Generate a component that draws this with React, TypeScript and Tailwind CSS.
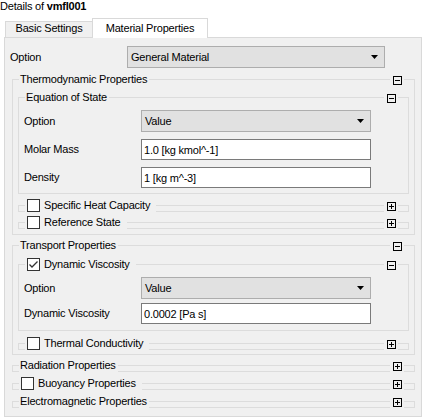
import React from "react";

const LINE = "border-[#dcdcdc]";

const ToggleIcon: React.FC<{ plus?: boolean }> = ({ plus }) => (
  <svg width="9" height="9" viewBox="0 0 9 9" className="block">
    <rect x="0.5" y="0.5" width="8" height="8" fill="none" stroke="#000" />
    <line x1="2" y1="4.5" x2="7" y2="4.5" stroke="#000" />
    {plus && <line x1="4.5" y1="2" x2="4.5" y2="7" stroke="#000" />}
  </svg>
);

const CheckBox: React.FC<{ checked?: boolean }> = ({ checked }) => (
  <svg width="13" height="13" viewBox="0 0 13 13" className="block shrink-0">
    <rect x="0.5" y="0.5" width="12" height="12" fill="#fff" stroke="#333" />
    {checked && (
      <polyline
        points="2.5,6.5 5,9 10.5,3.5"
        fill="none"
        stroke="#333"
        strokeWidth="1.3"
      />
    )}
  </svg>
);

interface GroupProps {
  label: string;
  checkbox?: "on" | "off";
  expanded?: boolean;
  className?: string;
  bodyClassName?: string;
  children?: React.ReactNode;
}

const Group: React.FC<GroupProps> = (props) => {
  const { label, checkbox, expanded, className, bodyClassName, children } = props;
  const closed = expanded ? "" : "border-b";

  return (
    <div className={className}>
      <div className="flex h-[13px]">
        <div className={`self-start mt-[6px] h-[7px] w-[7px] border-t border-l ${closed} ${LINE}`} />
        {checkbox && (
          <div className="ml-[2px]">
            <CheckBox checked={checkbox === "on"} />
          </div>
        )}
        <span
          className={`leading-[13px] whitespace-nowrap ${
            checkbox ? "ml-[4px] pr-[6px]" : "pl-[1px] pr-[2px]"
          }`}
        >
          {label}
        </span>
        <div className={`flex-1 self-start mt-[6px] h-[7px] border-t ${closed} ${LINE}`} />
        <div className="self-start mt-[3px] ml-[3px] mr-[2px]">
          <ToggleIcon plus={!expanded} />
        </div>
        <div className={`self-start mt-[6px] h-[7px] w-[11px] border-t border-r ${closed} ${LINE}`} />
      </div>
      {expanded && (
        <div className={`border-l border-r border-b ${LINE} ${bodyClassName ?? ""}`}>
          {children}
        </div>
      )}
    </div>
  );
};

const Select: React.FC<{ value: string }> = ({ value }) => (
  <div className="flex-1 h-[22px] flex items-center justify-between bg-[#e1e1e1] border border-[#adadad] pl-[3px] pr-[6px]">
    <span className="whitespace-nowrap">{value}</span>
    <svg width="7" height="4" viewBox="0 0 7 4" className="block">
      <polygon points="0,0 7,0 3.5,4" fill="#000" />
    </svg>
  </div>
);

const TextField: React.FC<{ value: string }> = ({ value }) => (
  <input
    readOnly
    value={value}
    className="flex-1 min-w-0 h-[21px] bg-white border border-[#7a7a7a] pl-[2px] outline-none"
  />
);

const Row: React.FC<{ label: string; className?: string; children: React.ReactNode }> = ({
  label,
  className,
  children,
}) => (
  <div className={`flex items-center ${className ?? "pl-[5px] pr-[37px]"}`}>
    <span className="w-[117px] shrink-0 whitespace-nowrap">{label}</span>
    {children}
  </div>
);

export default function App() {
  return (
    <div className="h-[417px] w-[422px] overflow-hidden bg-white flex flex-col font-['Liberation_Sans',Arial,sans-serif] text-[11px] text-black tracking-[-0.2px]">
      <div className="h-[13px] leading-[13px] whitespace-nowrap">
        Details of <span className="font-bold">vmfl001</span>
      </div>

      <div className="h-[24px] flex items-end pl-[5px]">
        <div className="w-[88px] h-[16px] border-t border-l border-r border-[#d9d9d9] bg-[#f0f0f0] text-center leading-[13px]">
          Basic Settings
        </div>
        <div className="relative z-10 -ml-[1px] -mb-[1px] w-[116px] h-[20px] pt-[3px] border-t border-l border-r border-[#d9d9d9] bg-white text-center leading-[13px]">
          Material Properties
        </div>
      </div>

      <div className="flex-1 ml-[4px] border border-[#d9d9d9] bg-[#f0f0f0] pl-[7px] pr-[6px] pt-[8px]">
        <Row label="Option" className="-ml-[2px] pr-[30px]">
          <Select value="General Material" />
        </Row>

        <Group
          label="Thermodynamic Properties"
          expanded
          className="mt-[5px]"
          bodyClassName="pt-[5px] pb-[5px] px-[5px]"
        >
          <Group
            label="Equation of State"
            expanded
            bodyClassName="pt-[6px] pb-[5px] flex flex-col gap-[7px]"
          >
            <Row label="Option">
              <Select value="Value" />
            </Row>
            <Row label="Molar Mass">
              <TextField value="1.0 [kg kmol^-1]" />
            </Row>
            <Row label="Density">
              <TextField value="1 [kg m^-3]" />
            </Row>
          </Group>
          <Group label="Specific Heat Capacity" checkbox="off" className="mt-[5px]" />
          <Group label="Reference State" checkbox="off" className="mt-[4px]" />
        </Group>

        <Group
          label="Transport Properties"
          expanded
          className="mt-[4px]"
          bodyClassName="pt-[6px] pb-[4px] px-[5px]"
        >
          <Group
            label="Dynamic Viscosity"
            checkbox="on"
            expanded
            bodyClassName="pt-[6px] pb-[6px] flex flex-col gap-[4px]"
          >
            <Row label="Option">
              <Select value="Value" />
            </Row>
            <Row label="Dynamic Viscosity">
              <TextField value="0.0002 [Pa s]" />
            </Row>
          </Group>
          <Group label="Thermal Conductivity" checkbox="off" className="mt-[6px]" />
        </Group>

        <Group label="Radiation Properties" className="mt-[4px]" />
        <Group label="Buoyancy Properties" checkbox="off" className="mt-[5px]" />
        <Group label="Electromagnetic Properties" className="mt-[5px]" />
      </div>
    </div>
  );
}
